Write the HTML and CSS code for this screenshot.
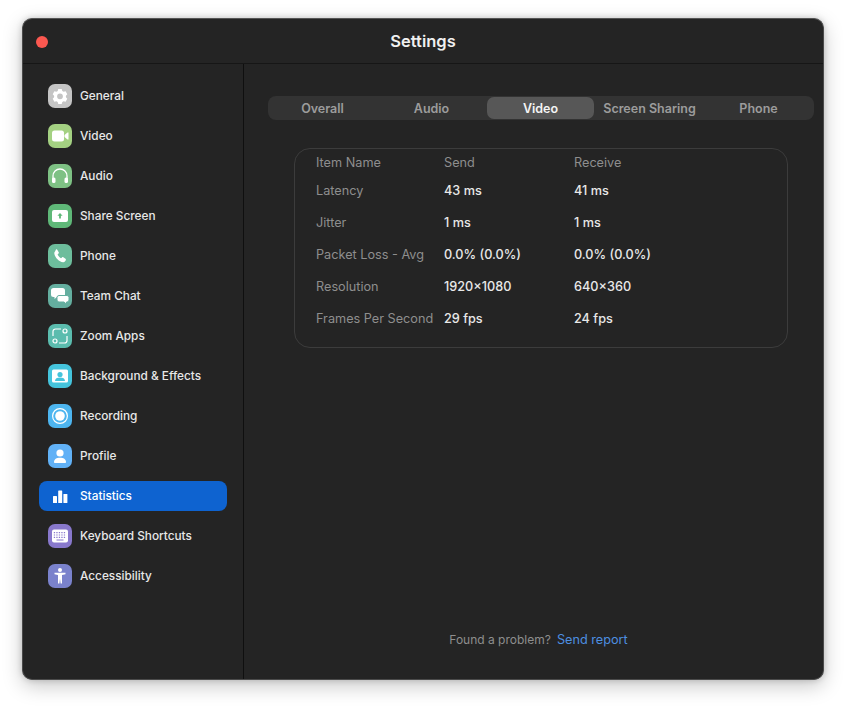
FILE: index.html
```html
<!DOCTYPE html>
<html lang="en">
<head>
<meta charset="utf-8">
<title>Settings</title>
<link rel="stylesheet" href="styles.css">
</head>
<body>
<div class="window">
  <header class="titlebar">
    <span class="close"></span>
    <h1 class="title">Settings</h1>
  </header>
  <div class="content">
    <nav class="sidebar">
      <div class="item"><span class="icon i-general"><svg viewBox="0 0 24 24"><path fill="#fff" fill-rule="evenodd" d="M10.300 5h3.400l.6 2 1.300.8 2-.5 1.700 3-1.400 1.500v1.500l1.400 1.500-1.700 3-2-.5-1.300.8-.6 2h-3.400l-.6-2-1.300-.8-2 .5-1.700-3 1.400-1.500v-1.500l-1.400-1.500 1.700-3 2 .5 1.300-.8zM12 9.400a2.900 2.900 0 1 0 0 5.800 2.900 2.900 0 0 0 0-5.800z"/></svg></span><span class="label">General</span></div>
      <div class="item"><span class="icon i-video"><svg viewBox="0 0 24 24"><rect x="4" y="6.500" width="12" height="11" rx="2.500" fill="#fff"/><path fill="#fff" d="M16.500 11l3-2.500h1v7h-1l-3-2.500z"/></svg></span><span class="label">Video</span></div>
      <div class="item"><span class="icon i-audio"><svg viewBox="0 0 24 24"><path fill="none" stroke="#fff" stroke-width="1.300" d="M5 15v-3a7 7 0 0 1 14 0v3"/><rect x="4" y="13.500" width="3.500" height="5.500" rx="1.500" fill="#fff"/><rect x="16.500" y="13.500" width="3.500" height="5.500" rx="1.500" fill="#fff"/></svg></span><span class="label">Audio</span></div>
      <div class="item"><span class="icon i-share"><svg viewBox="0 0 24 24"><rect x="4" y="6" width="16" height="12" rx="2" fill="#fff"/><path fill="#5fb878" d="M12 9l2.600 2.800h-1.700v2.700h-1.800v-2.700H9.400z"/></svg></span><span class="label">Share Screen</span></div>
      <div class="item"><span class="icon i-phone"><svg viewBox="0 0 24 24"><path fill="#fff" d="M8 5.500c.5-.3 1.100-.2 1.400.4l1.300 2.400c.3.500.2.900-.2 1.300l-.9.900c.6 1.500 1.800 2.800 3.400 3.800l1-.9c.4-.4.900-.4 1.300-.1l2.200 1.500c.5.400.5.900.3 1.400l-.9 1.300c-.5.600-1.100.9-1.800.8-4.400-.7-8.400-5-8.800-9.100-.1-.7.200-1.300.7-1.800z"/></svg></span><span class="label">Phone</span></div>
      <div class="item"><span class="icon i-chat"><svg viewBox="0 0 24 24"><path fill="#fff" d="M5.500 4h9A2.500 2.500 0 0 1 17 6.500v4a2.500 2.500 0 0 1-2.500 2.500H9l-2.500 2v-2h-1A2.500 2.500 0 0 1 3 10.500v-4A2.500 2.500 0 0 1 5.500 4z"/><path fill="#fff" stroke="#64ae9f" stroke-width="1" d="M11 11.500h8a2 2 0 0 1 2 2v2.500a2 2 0 0 1-2 2h-.5v2.200L16 18h-5a2 2 0 0 1-2-2v-2.500a2 2 0 0 1 2-2z"/></svg></span><span class="label">Team Chat</span></div>
      <div class="item"><span class="icon i-apps"><svg viewBox="0 0 24 24" fill="none" stroke="#fff" stroke-width="1.200"><path d="M5 12V7.500A2.500 2.500 0 0 1 7.500 5H13"/><path d="M19 12v4.500a2.500 2.500 0 0 1-2.500 2.500H11"/><circle cx="17" cy="7" r="2"/><circle cx="7" cy="17" r="2"/></svg></span><span class="label">Zoom Apps</span></div>
      <div class="item"><span class="icon i-bg"><svg viewBox="0 0 24 24"><rect x="4" y="5.500" width="16" height="13" rx="1.500" fill="#fff"/><circle cx="12" cy="10.500" r="2.600" fill="#45c4dc"/><path fill="#45c4dc" d="M7 17c0-2.500 2-3.600 5-3.600s5 1.100 5 3.600z"/></svg></span><span class="label">Background &amp; Effects</span></div>
      <div class="item"><span class="icon i-rec"><svg viewBox="0 0 24 24"><circle cx="12" cy="12" r="7.400" fill="none" stroke="#fff" stroke-width="1.200"/><circle cx="12" cy="12" r="4.800" fill="#fff"/></svg></span><span class="label">Recording</span></div>
      <div class="item"><span class="icon i-profile"><svg viewBox="0 0 24 24"><circle cx="12" cy="9" r="3.600" fill="#fff"/><path fill="#fff" d="M6 18.200c0-3 2.500-4.400 6-4.400s6 1.400 6 4.400c0 .4-.3.800-.8.800H6.800c-.5 0-.8-.4-.8-.8z"/></svg></span><span class="label">Profile</span></div>
      <div class="item active"><span class="icon"><svg viewBox="0 0 24 24"><rect x="5" y="12" width="4" height="7" rx=".6" fill="#fff"/><rect x="10.200" y="6.500" width="4" height="12.500" rx=".6" fill="#fff"/><rect x="15.400" y="10" width="4" height="9" rx=".6" fill="#fff"/></svg></span><span class="label">Statistics</span></div>
      <div class="item"><span class="icon i-kbd"><svg viewBox="0 0 24 24"><rect x="4" y="5.500" width="16" height="13" rx="2" fill="#fff"/><path stroke="#8878cc" stroke-width="1.200" stroke-dasharray="1.300 1.200" d="M5.800 8.600h12.400M5.800 11h12.400M5.800 13.300h12.400"/><path stroke="#8878cc" stroke-width="1.200" d="M8.500 16h7"/></svg></span><span class="label">Keyboard Shortcuts</span></div>
      <div class="item"><span class="icon i-access"><svg viewBox="0 0 24 24"><circle cx="12" cy="6" r="2" fill="#fff"/><path fill="#fff" d="M6.500 8.800h11v1.500l-3.500.8V19.500h-1.400l-.6-4.700-.6 4.700H10v-8.400l-3.500-.8z"/></svg></span><span class="label">Accessibility</span></div>
    </nav>
    <main class="main">
      <div class="tabs">
        <span class="tab">Overall</span>
        <span class="tab">Audio</span>
        <span class="tab selected">Video</span>
        <span class="tab">Screen Sharing</span>
        <span class="tab">Phone</span>
      </div>
      <section class="card">
        <div class="row head"><span>Item Name</span><span>Send</span><span>Receive</span></div>
        <div class="row"><span>Latency</span><b>43 ms</b><b>41 ms</b></div>
        <div class="row"><span>Jitter</span><b>1 ms</b><b>1 ms</b></div>
        <div class="row"><span>Packet Loss - Avg</span><b>0.0% (0.0%)</b><b>0.0% (0.0%)</b></div>
        <div class="row"><span>Resolution</span><b>1920×1080</b><b>640×360</b></div>
        <div class="row"><span>Frames Per Second</span><b>29 fps</b><b>24 fps</b></div>
      </section>
      <footer class="report"><span>Found a problem?</span><a class="link">Send report</a></footer>
    </main>
  </div>
</div>
</body>
</html>
```
FILE: styles.css
```css
* { box-sizing: border-box; }
html, body { margin: 0; height: 100%; background: #fff; }
body {
  padding: 18px 22px 26px;
  font-family: Inter, "Liberation Sans", sans-serif;
  font-size: 12px;
  overflow: hidden;
}
.window {
  width: 802px;
  height: 662px;
  background: #242424;
  border-radius: 10px;
  border: 1px solid #4a4a4a;
  border-top-color: #555;
  box-shadow: 0 6px 20px rgba(0,0,0,.22), 0 0 6px rgba(0,0,0,.18);
  display: flex;
  flex-direction: column;
  overflow: hidden;
}
.titlebar {
  height: 45px;
  flex: none;
  display: flex;
  align-items: center;
  justify-content: center;
  position: relative;
  border-bottom: 1px solid #161616;
}
.close {
  position: absolute;
  left: 13px;
  top: 17px;
  width: 12px;
  height: 12px;
  border-radius: 50%;
  background: #fb5850;
}
.title {
  margin: 0;
  font-size: 16.500px;
  font-weight: 600;
  color: #f0f0f0;
}
.content { flex: 1; display: flex; min-height: 0; }
.sidebar {
  width: 221px;
  flex: none;
  border-right: 1px solid #0f0f0f;
  padding: 17px 16px 0;
  display: flex;
  flex-direction: column;
  gap: 10px;
}
.item {
  height: 30px;
  display: flex;
  align-items: center;
  gap: 8px;
  padding-left: 9px;
  border-radius: 8px;
  color: #e8e8e8;
  font-weight: 500;
  font-size: 11.800px;
}
.label { padding-bottom: 1px; }
.item.active { background: #0e63d0; color: #fff; }
.icon {
  width: 24px;
  height: 24px;
  flex: none;
  border-radius: 7px;
  display: block;
}
.icon svg { display: block; width: 24px; height: 24px; }
.i-general { background: #c4c4c4; }
.i-video { background: #a4d182; }
.i-audio { background: #7ec184; }
.i-share { background: #5fb878; }
.i-phone { background: #6dbd9c; }
.i-chat { background: #64ae9f; }
.i-apps { background: #5bbcae; }
.i-bg { background: #45c4dc; }
.i-rec { background: #4db5ef; }
.i-profile { background: #61b1f6; }
.i-kbd { background: #8878cc; }
.i-access { background: #7a82cc; }
.main {
  flex: 1;
  min-width: 0;
  padding: 32px 9px 0 24px;
  display: flex;
  flex-direction: column;
  align-items: stretch;
}
.tabs {
  height: 24px;
  background: #333;
  border-radius: 8px;
  display: grid;
  grid-template-columns: repeat(5, 109px);
  align-items: center;
  color: #9c9c9c;
  font-weight: 600;
  font-size: 12.500px;
}
.tab {
  height: 22px;
  display: flex;
  align-items: center;
  justify-content: center;
  border-radius: 7px;
  white-space: nowrap;
}
.tab.selected { background: #575757; color: #f4f4f4; margin: 0 1px; }
.card {
  margin: 28px 26px 0 26px;
  height: 200px;
  border: 1px solid #3c3c3c;
  border-radius: 16px;
  padding: 3px 0 0 21px;
}
.row {
  height: 32px;
  display: grid;
  grid-template-columns: 128px 130px 1fr;
  align-items: center;
  color: #8e8e8e;
  font-size: 12.700px;
  white-space: nowrap;
}
.row.head { height: 20px; margin-bottom: 2px; }
.row b { font-weight: 450; color: #e8e8e8; }
.report {
  margin-top: auto;
  height: 47px;
  padding-right: 5px;
  display: flex;
  justify-content: center;
  align-items: baseline;
  gap: 6px;
  color: #8e8e8e;
  font-size: 12px;
}
.link { color: #4d8fe0; font-size: 12.700px; }
```
